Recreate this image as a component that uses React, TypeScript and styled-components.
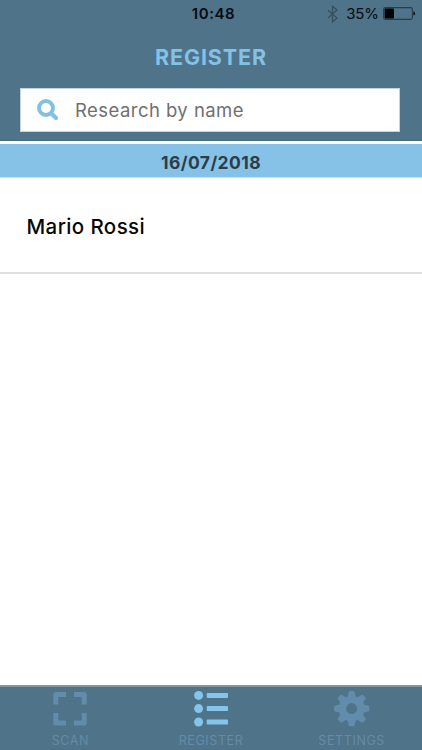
import React from "react";
import styled, { createGlobalStyle } from "styled-components";

const GlobalStyle = createGlobalStyle`
  * { box-sizing: border-box; }
  body { margin: 0; background: #fff; font-family: Inter, "Liberation Sans", sans-serif; }
`;

const Screen = styled.div`
  width: 100%;
  height: 100vh;
  display: flex;
  flex-direction: column;
  overflow: hidden;
  background: #fff;
`;

const Header = styled.header`
  height: 141px;
  flex: none;
  background: #4f7388;
  border-bottom: 1px solid #496c80;
`;

const StatusBar = styled.div`
  height: 28px;
  display: grid;
  grid-template-columns: 1fr auto 1fr;
  align-items: center;
  padding: 0 0 1px 5px;
  color: #060c10;
`;

const Clock = styled.time`
  grid-column: 2;
  font-size: 15px;
  font-weight: 600;
  letter-spacing: 0.6px;
`;

const StatusRight = styled.div`
  display: flex;
  align-items: center;
  justify-content: flex-end;
  padding-right: 6px;
`;

const Percent = styled.span`
  margin: 0 4px 0 8px;
  font-size: 15px;
  letter-spacing: -0.1px;
`;

const Title = styled.h1`
  margin: 0;
  height: 60px;
  line-height: 58px;
  text-align: center;
  font-size: 21.5px;
  font-weight: 700;
  letter-spacing: 0.9px;
  color: #82c1e8;
`;

const SearchBox = styled.label`
  display: flex;
  align-items: center;
  width: 380px;
  height: 44px;
  margin-left: 20px;
  padding-left: 16px;
  background: #fff;
  border: 1px solid #c5d2dc;
`;

const SearchText = styled.span`
  margin-left: 16px;
  font-size: 18.5px;
  letter-spacing: 0.45px;
  color: #6f6f6f;
`;

const DateBand = styled.div`
  flex: none;
  height: 34px;
  margin-top: 3px;
  line-height: 37px;
  text-align: center;
  font-size: 17.5px;
  font-weight: 700;
  letter-spacing: 0.4px;
  color: #2c3e49;
  background: #86c2e7;
  border-bottom: 1px solid #cfe0eb;
`;

const PersonRow = styled.div`
  flex: none;
  height: 96px;
  padding-left: 26.5px;
  line-height: 97px;
  font-size: 20.5px;
  font-weight: 500;
  letter-spacing: 0.4px;
  color: #080808;
  border-bottom: 2px solid #dedede;
`;

const TabBar = styled.nav`
  flex: none;
  height: 65px;
  margin-top: auto;
  display: grid;
  grid-template-columns: repeat(3, 1fr);
  background: #4f7388;
  border-top: 2px solid #84979f;
`;

const Tab = styled.div`
  display: flex;
  flex-direction: column;
  align-items: center;
  padding-top: 3px;
  color: #658ba8;
`;

const TabLabel = styled.span`
  margin-top: 4px;
  line-height: 17px;
  font-size: 12.5px;
  letter-spacing: 0.6px;
`;

const Icon = styled.svg`
  display: block;
  flex: none;
`;

const teeth = [0, 45, 90, 135, 180, 225, 270, 315];

export default function App() {
  return (
    <>
      <GlobalStyle />
      <Screen>
        <Header>
          <StatusBar>
            <Clock>10:48</Clock>
            <StatusRight>
              <Icon width="11" height="18" viewBox="0 0 11 18" fill="none" stroke="#35515f" strokeWidth="1.3">
                <path d="M1 5.2 10 13 5.5 17V1.2L10 5 1 13" />
              </Icon>
              <Percent>35%</Percent>
              <Icon width="33" height="13" viewBox="0 0 33 13">
                <rect x="0.6" y="0.6" width="28.8" height="11.8" rx="1.8" fill="none" stroke="#263d4a" strokeWidth="1.1" />
                <rect x="1.6" y="1.6" width="9.4" height="9.8" rx="0.8" fill="#020304" />
                <path d="M30.5 4.5c2 .5 2 3.5 0 4z" fill="#020304" />
              </Icon>
            </StatusRight>
          </StatusBar>
          <Title>REGISTER</Title>
          <SearchBox>
            <Icon width="22" height="22" viewBox="0 0 22 22" fill="none" stroke="#82c0e5">
              <circle cx="9" cy="9" r="7" strokeWidth="3.9" />
              <path d="m14.2 14.2 4.8 4.8" strokeWidth="4.2" strokeLinecap="round" />
            </Icon>
            <SearchText>Research by name</SearchText>
          </SearchBox>
        </Header>
        <DateBand>16/07/2018</DateBand>
        <PersonRow>Mario Rossi</PersonRow>
        <TabBar>
          <Tab>
            <Icon width="38" height="38" viewBox="0 0 38 38" fill="none" stroke="#628cab" strokeWidth="5" strokeLinejoin="round">
              <path d="M4.8 14.5v-10H15M23 4.5h10.2v10M33.2 23v10H23M15 33H4.8V23" />
            </Icon>
            <TabLabel>SCAN</TabLabel>
          </Tab>
          <Tab>
            <Icon width="38" height="38" viewBox="0 0 38 38" fill="#85c4eb">
              {[5.4, 18.6, 32].map((y) => (
                <g key={y}>
                  <circle cx="6.6" cy={y} r="4.5" />
                  <rect x="14.7" y={y - 2.5} width="21.3" height="5" rx="0.8" />
                </g>
              ))}
            </Icon>
            <TabLabel>REGISTER</TabLabel>
          </Tab>
          <Tab>
            <Icon width="38" height="38" viewBox="0 0 38 38" fill="#628cab">
              <g transform="translate(18.7 18.6)">
                <circle r="9.2" fill="none" stroke="#628cab" strokeWidth="7.4" />
                {teeth.map((a) => (
                  <path key={a} transform={`rotate(${a})`} d="M-4-11.5-2.9-16.8Q-2.7-17.6-2-17.6H2Q2.7-17.6 2.9-16.8L4-11.5z" />
                ))}
              </g>
            </Icon>
            <TabLabel>SETTINGS</TabLabel>
          </Tab>
        </TabBar>
      </Screen>
    </>
  );
}
